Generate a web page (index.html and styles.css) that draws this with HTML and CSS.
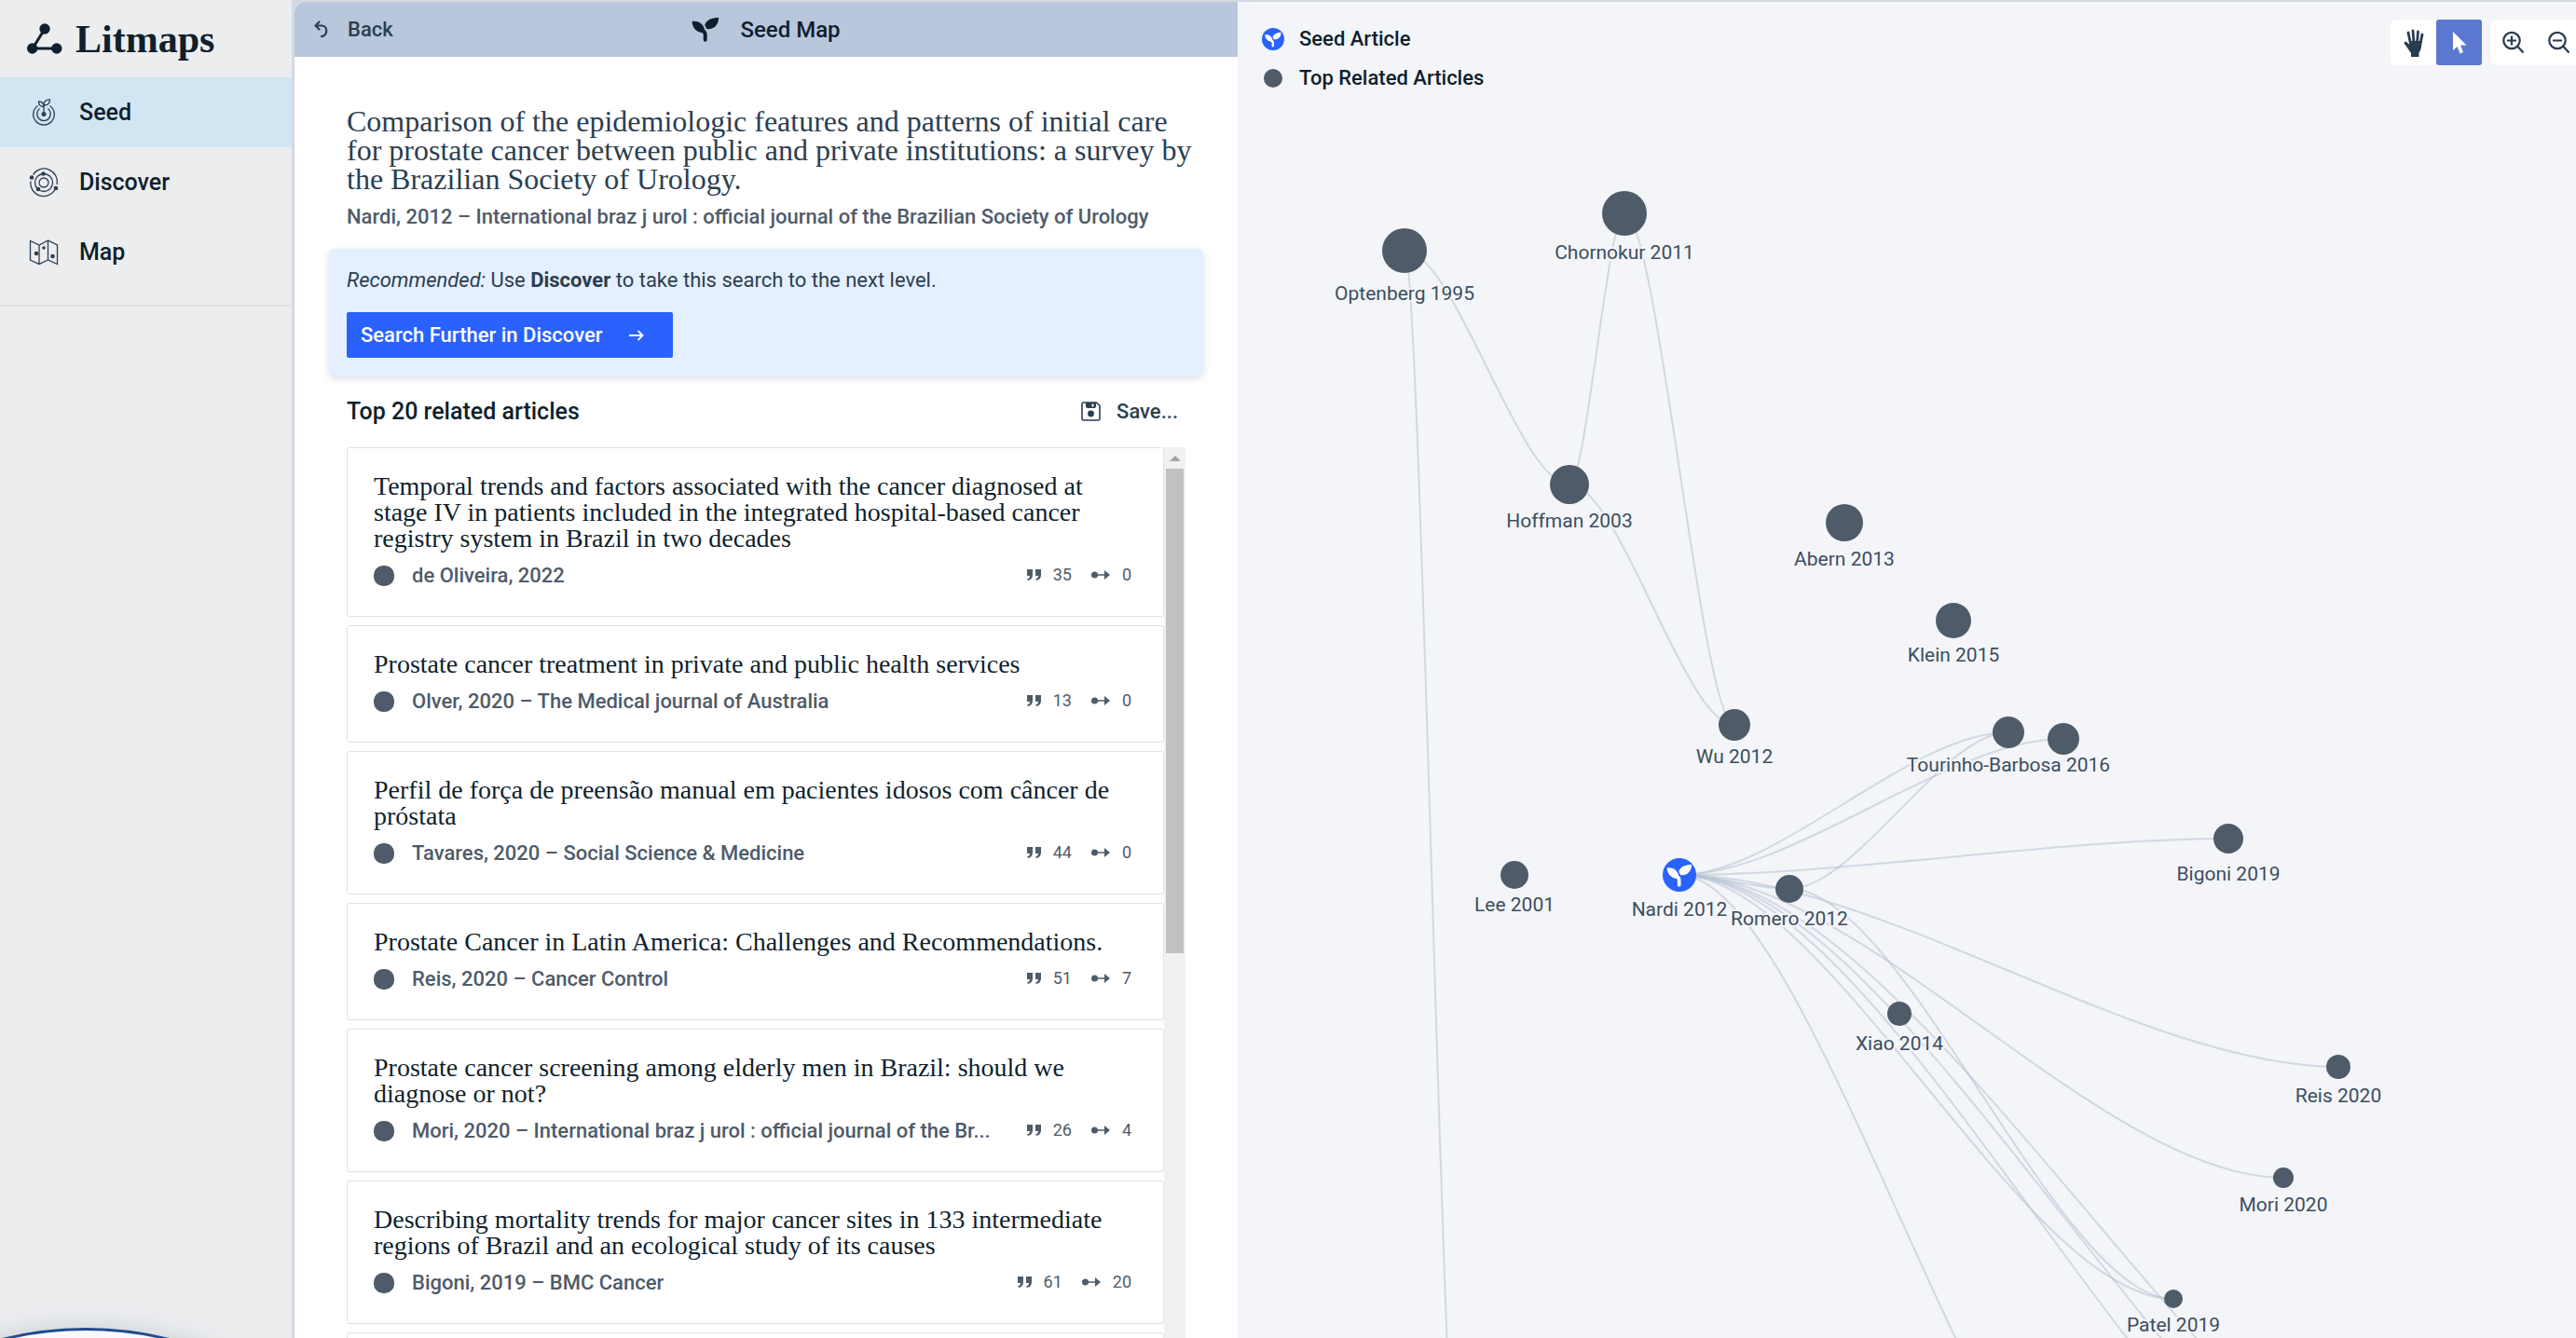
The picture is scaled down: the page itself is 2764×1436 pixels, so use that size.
FILE: index.html
```html
<!DOCTYPE html>
<html lang="en">
<head>
<meta charset="utf-8">
<title>Litmaps – Seed Map</title>
<link rel="stylesheet" href="styles.css">
</head>
<body>
<svg class="defs" aria-hidden="true">
  <symbol id="sprout" viewBox="70 54 90 82">
    <path d="M71 69C92 65 111 76 114 106C92 108 73 96 71 69z"/>
    <path d="M158 57C157 82 141 96 120 94C116 90 114 84 113 80C120 62 140 56 158 57z"/>
    <path d="M104 99Q114 102 114 112V129" fill="none" stroke="currentColor" stroke-width="12" stroke-linecap="round"/>
  </symbol>
  <symbol id="quote" viewBox="0 0 15 12">
    <path d="M0 0H6V6Q6 11 1 12L0 10.500Q3 9.500 3 7H0zM9 0H15V6Q15 11 10 12L9 10.500Q12 9.500 12 7H9z"/>
  </symbol>
  <symbol id="link" viewBox="0 0 20 12">
    <circle cx="3.500" cy="6" r="3.500"/><path d="M4 5.200H14V1L20 6L14 11V6.800H4z"/>
  </symbol>
</svg>

<div class="app">
  <aside class="sidebar">
    <a class="logo" href="#">
      <svg width="38" height="33" viewBox="0 0 38 33" aria-hidden="true">
        <path d="M19 6L6 27H32" fill="none" stroke="currentColor" stroke-width="3"/>
        <circle cx="19" cy="6" r="5.700"/><circle cx="5.700" cy="27" r="5.700"/><circle cx="31.800" cy="27" r="5.700"/>
      </svg>
      <span>Litmaps</span>
    </a>
    <nav class="nav">
      <a class="nav-item active" href="#">
        <svg width="32" height="32" viewBox="0 0 32 32" aria-hidden="true" class="line">
          <path d="M9.500 8.500A11.300 11.300 0 1 0 22.500 8.500M11.500 11.500A7.300 7.300 0 1 0 20.500 11.500M16 17V9"/>
          <path d="M16 9.500C12 9.500 10.500 7.500 10.500 4C14 4 16 6 16 9.500zM16 8C16 3.500 18.500 1.800 22.500 1.800C22.500 6 20.500 8 16 8z"/>
          <circle class="dot" cx="16" cy="17.500" r="2.500"/>
        </svg>
        Seed
      </a>
      <a class="nav-item" href="#">
        <svg width="32" height="32" viewBox="0 0 32 32" aria-hidden="true" class="line">
          <circle cx="16" cy="16" r="5"/><circle cx="16" cy="16" r="9.500"/>
          <path d="M2 14.500A14 14 0 0 0 28 23.500M30 18A14 14 0 0 0 4.500 7.500"/>
          <circle class="dot" cx="3" cy="10.500" r="2.300"/><circle class="dot" cx="15.500" cy="6.500" r="2.300"/>
          <circle class="dot" cx="10" cy="23" r="2.300"/><circle class="dot" cx="29" cy="22" r="2.300"/>
        </svg>
        Discover
      </a>
      <a class="nav-item" href="#">
        <svg width="32" height="32" viewBox="0 0 32 32" aria-hidden="true" class="line">
          <path d="M1.500 3.500V24L11 28.500L20.500 24L30.500 28.500V8L20.500 3L11 8zM11 8V28.500M20.500 3V24"/>
          <circle class="dot" cx="8" cy="17" r="2.300"/><circle class="dot" cx="16" cy="11" r="1.800"/><circle class="dot" cx="25.500" cy="20" r="2.300"/>
        </svg>
        Map
      </a>
    </nav>
    <div class="bubble"></div>
  </aside>

  <div class="main">
    <section class="panel">
      <header class="panel-head">
        <button class="back" type="button">
          <svg width="15" height="19" viewBox="0 0 15 19" aria-hidden="true">
            <path d="M5.500 1.500L1.500 5.500L5.500 9.500M2 5.500H8C15 5.500 15 16.500 8 17.200" fill="none" stroke="currentColor" stroke-width="2.200" stroke-linecap="round"/>
          </svg>
          Back
        </button>
        <h1 class="panel-title">
          <svg width="30" height="27" aria-hidden="true"><use href="#sprout"/></svg>
          Seed Map
        </h1>
      </header>

      <div class="panel-body">
        <h2 class="paper">Comparison of the epidemiologic features and patterns of initial care for prostate cancer between public and private institutions: a survey by the Brazilian Society of Urology.</h2>
        <p class="source">Nardi, 2012 – International braz j urol : official journal of the Brazilian Society of Urology</p>

        <div class="tip">
          <p><em>Recommended:</em> Use <strong>Discover</strong> to take this search to the next level.</p>
          <button class="primary" type="button">
            Search Further in Discover
            <svg width="17" height="14" viewBox="0 0 17 14" aria-hidden="true"><path d="M1 7H15M10.500 2L15.500 7L10.500 12" fill="none" stroke="currentColor" stroke-width="1.800"/></svg>
          </button>
        </div>

        <div class="list-head">
          <h3>Top 20 related articles</h3>
          <button class="save" type="button">
            <svg width="21" height="21" viewBox="0 0 21 21" aria-hidden="true">
              <path d="M1 2.500Q1 1 2.500 1H16.500L20 4.500V18.500Q20 20 18.500 20H2.500Q1 20 1 18.500z" fill="none" stroke="currentColor" stroke-width="1.600"/>
              <path fill-rule="evenodd" d="M5 1H16V5Q16 7 14 7H7Q5 7 5 5zM11.500 2.500V5.500H13.500V2.500z"/><circle cx="10.500" cy="13" r="3.400"/>
            </svg>
            Save...
          </button>
        </div>

        <div class="scroller">
          <ul class="cards">
            <li class="card">
              <h4>Temporal trends and factors associated with the cancer diagnosed at stage IV in patients included in the integrated hospital-based cancer registry system in Brazil in two decades</h4>
              <div class="meta"><i class="mark"></i><span class="who">de Oliveira, 2022</span>
                <span class="stat"><svg width="15" height="12"><use href="#quote"/></svg>35</span><span class="stat"><svg width="20" height="12"><use href="#link"/></svg>0</span></div>
            </li>
            <li class="card">
              <h4>Prostate cancer treatment in private and public health services</h4>
              <div class="meta"><i class="mark"></i><span class="who">Olver, 2020 – The Medical journal of Australia</span>
                <span class="stat"><svg width="15" height="12"><use href="#quote"/></svg>13</span><span class="stat"><svg width="20" height="12"><use href="#link"/></svg>0</span></div>
            </li>
            <li class="card">
              <h4 lang="pt">Perfil de força de preensão manual em pacientes idosos com câncer de próstata</h4>
              <div class="meta"><i class="mark"></i><span class="who">Tavares, 2020 – Social Science &amp; Medicine</span>
                <span class="stat"><svg width="15" height="12"><use href="#quote"/></svg>44</span><span class="stat"><svg width="20" height="12"><use href="#link"/></svg>0</span></div>
            </li>
            <li class="card">
              <h4>Prostate Cancer in Latin America: Challenges and Recommendations.</h4>
              <div class="meta"><i class="mark"></i><span class="who">Reis, 2020 – Cancer Control</span>
                <span class="stat"><svg width="15" height="12"><use href="#quote"/></svg>51</span><span class="stat"><svg width="20" height="12"><use href="#link"/></svg>7</span></div>
            </li>
            <li class="card">
              <h4>Prostate cancer screening among elderly men in Brazil: should we diagnose or not?</h4>
              <div class="meta"><i class="mark"></i><span class="who">Mori, 2020 – International braz j urol : official journal of the Br...</span>
                <span class="stat"><svg width="15" height="12"><use href="#quote"/></svg>26</span><span class="stat"><svg width="20" height="12"><use href="#link"/></svg>4</span></div>
            </li>
            <li class="card">
              <h4>Describing mortality trends for major cancer sites in 133 intermediate regions of Brazil and an ecological study of its causes</h4>
              <div class="meta"><i class="mark"></i><span class="who">Bigoni, 2019 – BMC Cancer</span>
                <span class="stat"><svg width="15" height="12"><use href="#quote"/></svg>61</span><span class="stat"><svg width="20" height="12"><use href="#link"/></svg>20</span></div>
            </li>
            <li class="card"></li>
          </ul>
          <div class="scrollbar" aria-hidden="true">
            <div class="arrow"></div>
            <div class="thumb"></div>
          </div>
        </div>
      </div>
    </section>

    <section class="map" aria-label="Citation map">
      <svg class="graph">
        <g id="edges"></g>
        <g id="nodes"></g>
      </svg>
      <ul class="legend">
        <li><svg width="24" height="24" viewBox="0 0 24 24" aria-hidden="true"><circle cx="12" cy="12" r="12" fill="#2962ff"/><use href="#sprout" x="3" y="4" width="18" height="17" class="white"/></svg>Seed Article</li>
        <li><svg width="24" height="24" viewBox="0 0 24 24" aria-hidden="true"><circle cx="12" cy="12" r="10" fill="#4f5b69"/></svg>Top Related Articles</li>
      </ul>
      <div class="toolbar">
        <div class="group">
          <button type="button" aria-label="Pan">
            <svg width="24" height="32" viewBox="0 0 24 32" aria-hidden="true">
              <path d="M8.500 17L6 5M12 16L11 3M15.500 16L16.500 4M19 17L21 7M8 22L3 16" fill="none" stroke="currentColor" stroke-width="2.800" stroke-linecap="round"/>
              <path d="M7 14H20.500L20 21Q19 25 17.500 26.500V31H9V27Q6 23 2.500 17L5 16L7.500 18z"/>
            </svg>
          </button>
          <button type="button" class="on" aria-label="Select">
            <svg width="16" height="26" viewBox="0 0 16 26" aria-hidden="true"><path d="M1 1V21L5.500 17L8.500 24.500L12 23L9 15.500H15.500z"/></svg>
          </button>
        </div>
        <div class="group">
          <button type="button" aria-label="Zoom in">
            <svg width="24" height="25" viewBox="0 0 24 25" aria-hidden="true" class="lens"><circle cx="10" cy="10.500" r="8.700"/><path d="M16.500 17L22.500 23.500M5 10.500H15M10 5.500V15.500"/></svg>
          </button>
          <button type="button" aria-label="Zoom out">
            <svg width="24" height="25" viewBox="0 0 24 25" aria-hidden="true" class="lens"><circle cx="10" cy="10.500" r="8.700"/><path d="M16.500 17L22.500 23.500M5 10.500H15"/></svg>
          </button>
        </div>
      </div>
    </section>
  </div>
</div>
<script src="graph.js"></script>
</body>
</html>
```
FILE: styles.css
```css
* { box-sizing: border-box; }

body {
  margin: 0;
  font: 500 22px/26px Roboto, "Liberation Sans", sans-serif;
  color: #0f1f2d;
  background: #ecedef;
}

h1, h2, h3, h4, p, ul { margin: 0; padding: 0; font-weight: inherit; }
ul { list-style: none; }
a { color: inherit; text-decoration: none; }
svg { flex: none; fill: currentColor; }
button { font: inherit; color: inherit; background: none; border: 0; padding: 0; display: flex; align-items: center; cursor: pointer; }

.defs { position: absolute; width: 0; height: 0; }
.white { color: #fff; fill: #fff; }

.app {
  display: grid;
  grid-template-columns: 313px minmax(0, 1fr);
  height: 100vh;
  overflow: hidden;
}

/* Sidebar */
.sidebar { position: relative; overflow: hidden; }
.logo { display: flex; align-items: center; gap: 14px; height: 83px; padding-left: 29px; }
.logo span { font: 700 42px/48px "Liberation Serif", serif; }
.nav { padding-bottom: 19px; border-bottom: 2px solid #e0e1e3; }
.nav-item { display: flex; align-items: center; gap: 22px; height: 75px; padding-left: 31px; font-size: 25px; }
.nav-item.active { background: #d2e5f3; }
.line { fill: none; stroke: #2c3e50; stroke-width: 1.3; }
.line .dot { fill: #2c3e50; stroke: none; }
.bubble {
  position: absolute;
  left: -278px;
  bottom: -729px;
  width: 740px;
  height: 740px;
  border: 3px solid #1f4a8f;
  border-radius: 50%;
  background: #f8faff;
  box-shadow: 0 0 24px #c3cccf;
}

/* Panel */
.main {
  display: grid;
  grid-template-columns: minmax(0, 1012px) minmax(0, 1fr);
  padding: 2px 0 0 3px;
  background: #d5d8e0;
  min-height: 0;
}
.panel {
  display: flex;
  flex-direction: column;
  min-height: 0;
  overflow: hidden;
  background: #fff;
  border-top-left-radius: 12px;
}
.panel-head {
  flex: none;
  display: grid;
  grid-template-columns: 1fr auto 1fr;
  align-items: center;
  height: 59px;
  padding: 0 21px;
  background: #b8c7db;
}
.back { gap: 21px; color: #2c3e50; }
.panel-title { display: flex; align-items: center; gap: 22px; font-size: 24px; }

.panel-body {
  flex: 1;
  display: flex;
  flex-direction: column;
  min-height: 0;
  padding: 54px 56px 0;
}
.paper { margin-right: -16px; font: 400 32px/31px "Liberation Serif", serif; color: #2c3e50; }
.source { margin: 12px 0 21px; color: #4f5b69; }
.tip {
  flex: none;
  margin: 0 -19px;
  padding: 21px 19px 19px;
  border-radius: 6px;
  background: #e4f0ff;
  color: #2c3e50;
  box-shadow: 0 3px 8px #d9dee6;
}
.tip p { font-weight: 400; }
.tip strong { font-weight: 700; }
.primary {
  margin-top: 21px;
  height: 49px;
  padding: 0 31px 0 15px;
  gap: 28px;
  border-radius: 2px;
  background: #2962ff;
  color: #fff;
}
.list-head {
  flex: none;
  display: flex;
  justify-content: space-between;
  align-items: center;
  height: 77px;
}
.list-head h3 { font-size: 25px; }
.save { gap: 17px; padding-right: 8px; color: #2c3e50; }

.scroller { flex: 1; display: flex; min-height: 0; overflow: hidden; }
.cards { flex: 1; min-width: 0; display: flex; flex-direction: column; gap: 9px; }
.card {
  flex: none;
  min-height: 126px;
  padding: 27px 34px 30px 28px;
  border: 1px solid #e0e1e3;
  border-radius: 3px;
}
.card h4 { font: 400 28px/28px "Liberation Serif", serif; }
.meta { display: flex; align-items: center; height: 26px; margin-top: 13px; color: #4f5b69; }
.mark { flex: none; width: 22px; height: 22px; margin-right: 19px; border-radius: 10px; background: #4f5b69; }
.who { flex: 1; min-width: 0; margin-right: 24px; white-space: nowrap; }
.stat { display: flex; align-items: center; gap: 13px; padding-bottom: 3px; font-size: 18px; font-weight: 400; }
.stat + .stat { margin-left: 21px; }

.scrollbar { width: 23px; padding: 0 2px; background: #f1f1f1; }
.arrow { height: 23px; display: grid; place-items: center; }
.arrow::before { content: ""; border: 6px solid transparent; border-top: 0; border-bottom-color: #a3a3a3; }
.thumb { height: 520px; background: #c1c1c1; }

/* Map */
.map { position: relative; min-width: 0; overflow: hidden; background: #f3f5f8; }
.graph { display: block; width: 100%; height: 100%; }
.edge { fill: none; stroke: #b4c0d2; stroke-opacity: .55; stroke-width: 2; }
.node { fill: #4f5b69; }
.node.seed { fill: #2962ff; }
.label {
  fill: #3d4d60;
  font-size: 21px;
  font-weight: 400;
  text-anchor: middle;
  stroke: #f3f5f8;
  stroke-width: 4px;
  stroke-linejoin: round;
  paint-order: stroke;
}
.legend { position: absolute; top: 19px; left: 26px; }
.legend li { display: flex; align-items: center; gap: 16px; height: 42px; }
/* The zoom group runs on past the window's right edge. */
.toolbar { position: absolute; top: 19px; right: -6px; display: flex; gap: 9px; color: #283b50; }
.group { display: flex; border-radius: 6px; background: #fff; }
.group button { width: 49px; height: 49px; justify-content: center; border-radius: 3px; }
.group .on { background: #5b78d1; color: #fff; }
.lens { fill: none; stroke: currentColor; stroke-width: 2.2; }
```
FILE: graph.js
```javascript
// Articles on the map: centre, radius, label text and label baseline.
const nodes = {
  optenberg: [179, 267, 24, 'Optenberg 1995', 320],
  chornokur: [415, 227, 24, 'Chornokur 2011', 276],
  hoffman: [356, 518, 21, 'Hoffman 2003', 564],
  abern: [651, 559, 20, 'Abern 2013', 605],
  klein: [768, 664, 19, 'Klein 2015', 708],
  wu: [533, 776, 17, 'Wu 2012', 817],
  tourinho: [827, 784, 17, 'Tourinho-Barbosa 2016', 826],
  other: [886, 791, 17],
  bigoni: [1063, 898, 16, 'Bigoni 2019', 943],
  lee: [297, 937, 15, 'Lee 2001', 976],
  nardi: [474, 937, 18, 'Nardi 2012', 981],
  romero: [592, 952, 15, 'Romero 2012', 991],
  xiao: [710, 1086, 13, 'Xiao 2014', 1125],
  reis: [1181, 1143, 13, 'Reis 2020', 1181],
  mori: [1122, 1262, 11, 'Mori 2020', 1298],
  patel: [1004, 1392, 10, 'Patel 2019', 1427],
  // Below the visible part of the canvas.
  low1: [238, 1629, 8], low2: [945, 1667, 8], low3: [1240, 1670, 8], low4: [1299, 1671, 8], low5: [1358, 1670, 8]
};
const edges = ['optenberg hoffman', 'optenberg low1', 'chornokur hoffman', 'chornokur wu', 'hoffman wu',
  'nardi tourinho', 'nardi other', 'nardi bigoni', 'nardi romero', 'nardi reis', 'nardi mori', 'nardi patel',
  'nardi low2', 'nardi low3', 'nardi low4', 'nardi low5', 'romero tourinho', 'romero patel'];

const add = (parent, tag, attrs) => {
  const el = document.createElementNS('http://www.w3.org/2000/svg', tag);
  for (const k in attrs) el.setAttribute(k, attrs[k]);
  return document.getElementById(parent).appendChild(el);
};
for (const e of edges) {
  const [a, b] = e.split(' ').map(n => nodes[n]);
  const d = (b[0] - a[0]) * 0.3;
  add('edges', 'path', { class: 'edge', d: `M${a[0]} ${a[1]}C${a[0] + d} ${a[1]} ${b[0] - d} ${b[1]} ${b[0]} ${b[1]}` });
}
for (const n in nodes) {
  const [x, y, r, text, base] = nodes[n];
  add('nodes', 'circle', { class: n === 'nardi' ? 'node seed' : 'node', cx: x, cy: y, r });
  if (n === 'nardi') add('nodes', 'use', { href: '#sprout', class: 'white', x: x - 14, y: y - 12, width: 28, height: 25 });
  if (text) add('nodes', 'text', { class: 'label', x, y: base }).textContent = text;
}
```
